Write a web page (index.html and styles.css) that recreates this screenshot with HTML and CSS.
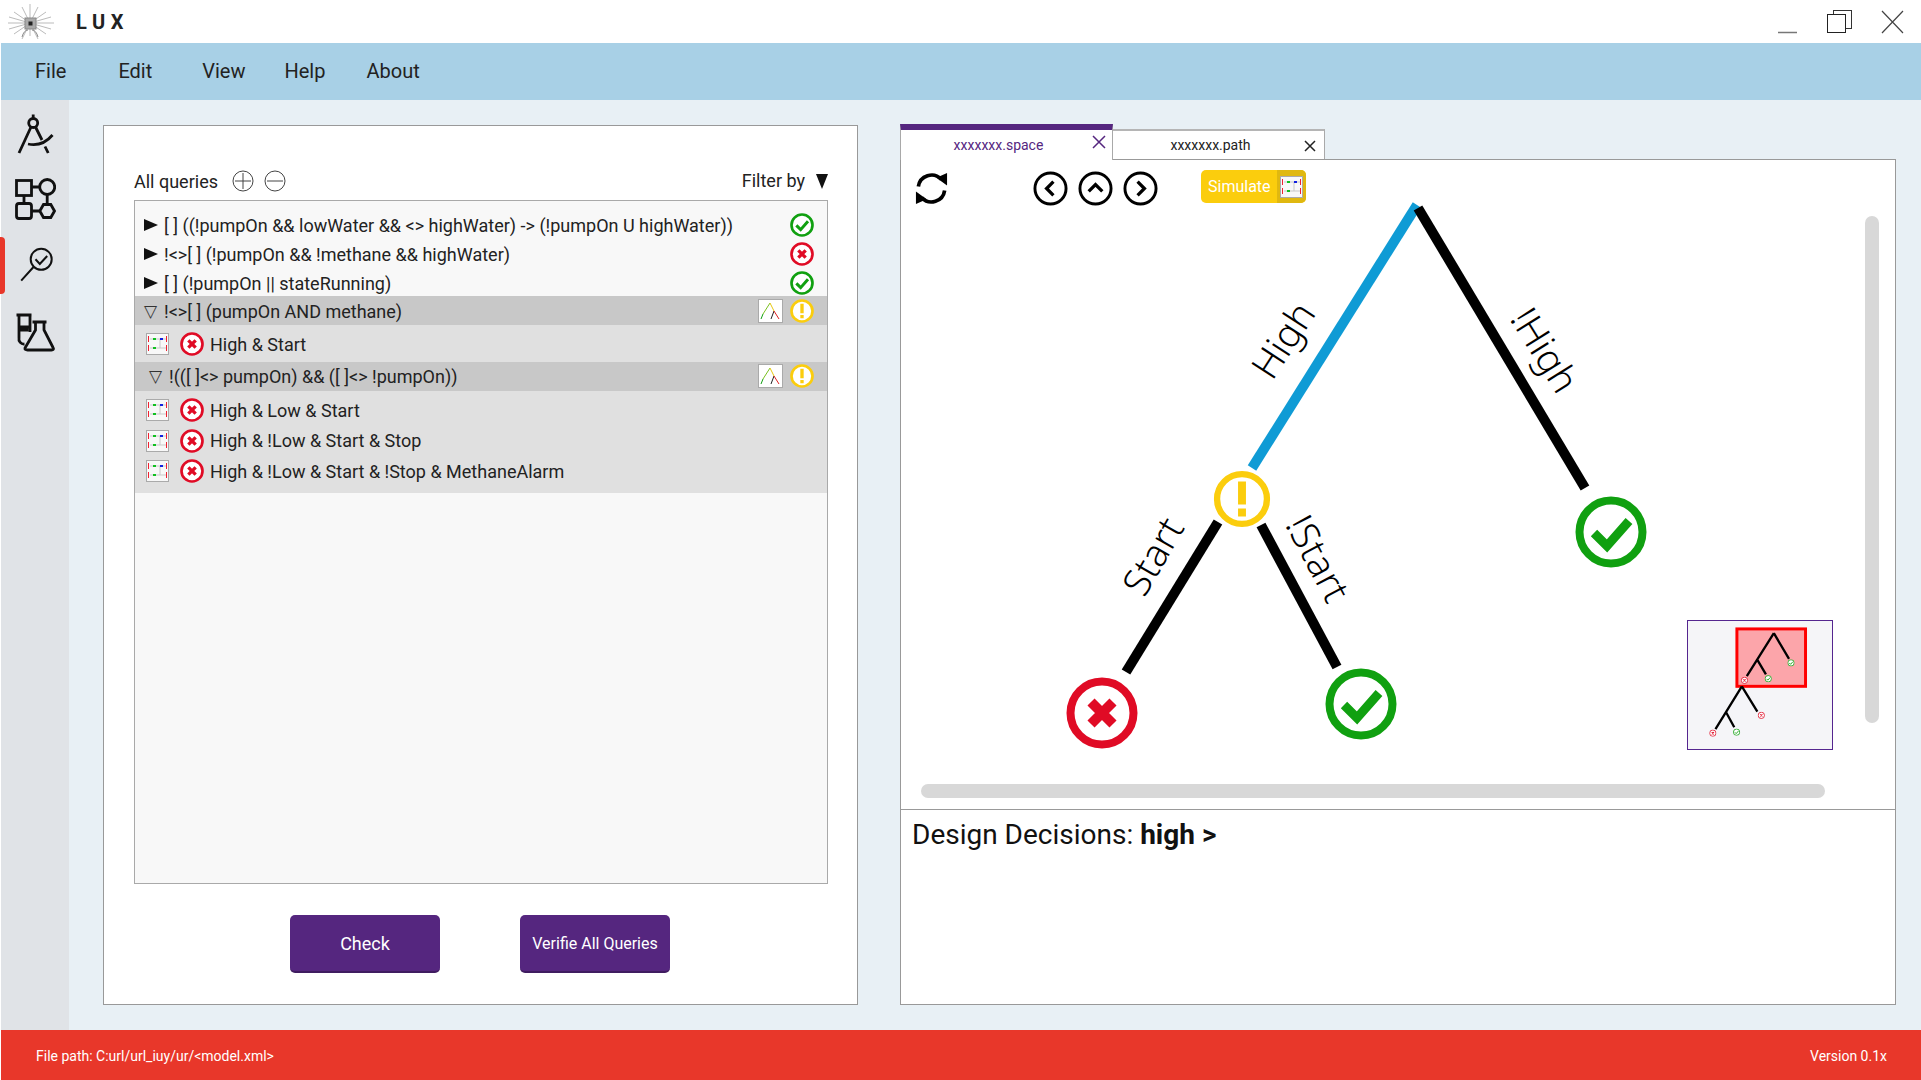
FILE: index.html
```html
<!DOCTYPE html>
<html lang="en">
    <head>
        <meta charset="UTF-8">
        <meta name="viewport" content="width=device-width, initial-scale=1.0">
        <title>LUX</title>
        <link rel="stylesheet" href="styles.css">
    </head>
    <body>
        <!-- shared icons -->
        <svg class="defs" width="0" height="0">
            <symbol id="ok" viewBox="0 0 72 72">
                <circle cx="36" cy="36" r="31.5" fill="#fff" stroke="#10a010" stroke-width="8"/>
                <path d="M19 37 L32 50 L54 25" fill="none" stroke="#10a010" stroke-width="9"/>
            </symbol>
            <symbol id="bad" viewBox="0 0 72 72">
                <circle cx="36" cy="36" r="31.5" fill="#fff" stroke="#e00b25" stroke-width="8"/>
                <path d="M25 25 L47 47 M47 25 L25 47" fill="none" stroke="#e00b25" stroke-width="10"/>
            </symbol>
            <symbol id="warn" viewBox="0 0 72 72">
                <circle cx="36" cy="36" r="31.5" fill="#fff" stroke="#fbcd0d" stroke-width="8"/>
                <path d="M31 14 H41 V43 H31 Z M31 48 H41 V58 H31 Z" fill="#fbcd0d"/>
            </symbol>
            <symbol id="trace" viewBox="0 0 23 22">
                <rect x="0.5" y="0.5" width="22" height="21" fill="#f8f8f8" stroke="#aaa"/>
                <path d="M4 6 H20 M4 15 H20 M14 6 V15" stroke="#c8c8c8" fill="none"/>
                <path d="M2.5 3 V9 M20.5 3 V9 M2.5 12 V18 M20.5 12 V18" stroke="#f02030" fill="none"/>
                <path d="M7 6 H10 M7 15 H10" stroke="#10c020" stroke-width="2" fill="none"/>
                <path d="M14 6 H17" stroke="#1020e0" stroke-width="2" fill="none"/>
            </symbol>
            <symbol id="thumb" viewBox="0 0 25 24">
                <rect x="0.5" y="0.5" width="24" height="23" fill="#fff" stroke="#aaa"/>
                <path d="M12 4 L5 15" stroke="#7ac020" fill="none"/>
                <path d="M5 15 L3 20" stroke="#10a010" fill="none"/>
                <path d="M12 4 L16 12" stroke="#e8c810" fill="none"/>
                <path d="M16 12 L13 20" stroke="#222" fill="none"/>
                <path d="M16 12 L21 20" stroke="#e02020" fill="none"/>
            </symbol>
        </svg>

        <div class="app">
            <div class="titlebar">
                <svg class="logo" width="48" height="40" viewBox="6 2 48 40" stroke="#bbb" fill="none">
                    <path d="M30 4 V36 M8 23 H54 M14 12 L46 34 M46 12 L14 34 M22 7 L38 39 M38 7 L22 39 M9 17 L51 29 M51 17 L9 29"/>
                    <path d="M22 37 Q24 30 28 30 M38 37 Q36 30 32 30" stroke="#888"/>
                    <rect x="25" y="18" width="11" height="11" fill="#aaa" stroke="#888"/>
                    <rect x="28.5" y="21.5" width="4" height="4" fill="#222" stroke="none"/>
                </svg>
                <span class="app-name">LUX</span>
                <div class="window-controls">
                    <svg class="win-min" width="20" height="24" viewBox="0 0 20 24"><path d="M0 22.5 H19" stroke="#777" stroke-width="1.5"/></svg>
                    <svg width="26" height="24" viewBox="0 0 26 24" fill="#fff">
                        <rect x="6.5" y="0.5" width="18" height="18" stroke="#333"/>
                        <rect x="0.5" y="4.5" width="18" height="18" stroke="#222"/>
                    </svg>
                    <svg width="23" height="24" viewBox="0 0 23 24"><path d="M1 1 L22 23 M22 1 L1 23" stroke="#444" stroke-width="1.2"/></svg>
                </div>
            </div>

            <div class="menubar">
                <span class="menu-item file">File</span>
                <span class="menu-item edit">Edit</span>
                <span class="menu-item view">View</span>
                <span class="menu-item help">Help</span>
                <span class="menu-item about">About</span>
            </div>

            <div class="workspace">
                <div class="sidebar">
                    <div class="nav-item">
                        <svg class="nav-icon" viewBox="11.5 112 44 44">
                            <circle cx="32.7" cy="123" r="4.5"/>
                            <path d="M32.7 114.5 V118.5 M30.5 127 L18.5 153 M35 127 L41.5 140 M44.5 146.5 L47.7 153 M27.5 144 Q42 147 52 135"/>
                        </svg>
                    </div>
                    <div class="nav-item">
                        <svg class="nav-icon" viewBox="11.5 178 44 44">
                            <rect x="16" y="180.5" width="15" height="15"/>
                            <circle cx="46.7" cy="187" r="7.5"/>
                            <rect x="16" y="203.5" width="15" height="15" rx="2.5"/>
                            <path d="M54 211 L50.3 217.5 H43 L39.3 211 L43 204.5 H50.3 Z"/>
                            <path d="M31 187 H39 M31 211 H39 M23.5 195.5 V203.5 M46.7 194.5 V204.5"/>
                        </svg>
                    </div>
                    <div class="nav-item active">
                        <span class="active-mark"></span>
                        <svg class="nav-icon fine" viewBox="11.5 244 44 44">
                            <circle cx="40.7" cy="259.3" r="10.5"/>
                            <path d="M33 267 L20.7 280.7 M35 259.3 L39.3 264 L46.7 256"/>
                        </svg>
                    </div>
                    <div class="nav-item">
                        <svg class="nav-icon" viewBox="11.5 311 44 44">
                            <path d="M16 316 H31 M18.5 316 V339 A5 5 0 0 0 24 345 M29.5 316 V333 M18.5 328 H29 M18.5 331 H28"/>
                            <path d="M32 323 H46 M35 323 V331 L24.5 349 Q24 351 27 351 H51 Q54 351 52.5 348.5 L43.5 331 V323"/>
                        </svg>
                    </div>
                </div>

                <div class="main">
                    <div class="queries-panel">
                        <div class="queries-head">
                            <span class="queries-title">All queries</span>
                            <svg class="round-btn" viewBox="0 0 22 22"><circle cx="11" cy="11" r="10"/><path d="M11 3 V19 M3 11 H19"/></svg>
                            <svg class="round-btn" viewBox="0 0 22 22"><circle cx="11" cy="11" r="10"/><path d="M3 11 H19"/></svg>
                            <span class="filter">Filter by</span>
                            <span class="filter-arrow"></span>
                        </div>

                        <div class="query-list">
                            <div class="query-row">
                                <span class="caret"></span>
                                <span class="query-text">[ ] ((!pumpOn &amp;&amp; lowWater &amp;&amp; &lt;&gt; highWater) -&gt; (!pumpOn U highWater))</span>
                                <svg class="status"><use href="#ok"/></svg>
                            </div>
                            <div class="query-row">
                                <span class="caret"></span>
                                <span class="query-text">!&lt;&gt;[ ] (!pumpOn &amp;&amp; !methane &amp;&amp; highWater)</span>
                                <svg class="status"><use href="#bad"/></svg>
                            </div>
                            <div class="query-row short">
                                <span class="caret"></span>
                                <span class="query-text">[ ] (!pumpOn || stateRunning)</span>
                                <svg class="status"><use href="#ok"/></svg>
                            </div>
                            <div class="query-row open first-open">
                                <span class="caret-open">&#9661;</span>
                                <span class="query-text">!&lt;&gt;[ ] (pumpOn AND methane)</span>
                                <svg class="thumb"><use href="#thumb"/></svg>
                                <svg class="status"><use href="#warn"/></svg>
                            </div>
                            <div class="children single">
                                <div class="child-row">
                                    <svg class="trace"><use href="#trace"/></svg>
                                    <svg class="child-status"><use href="#bad"/></svg>
                                    <span>High &amp; Start</span>
                                </div>
                            </div>
                            <div class="query-row open deep">
                                <span class="caret-open">&#9661;</span>
                                <span class="query-text">!(([ ]&lt;&gt; pumpOn) &amp;&amp; ([ ]&lt;&gt; !pumpOn))</span>
                                <svg class="thumb"><use href="#thumb"/></svg>
                                <svg class="status"><use href="#warn"/></svg>
                            </div>
                            <div class="children">
                                <div class="child-row">
                                    <svg class="trace"><use href="#trace"/></svg>
                                    <svg class="child-status"><use href="#bad"/></svg>
                                    <span>High &amp; Low &amp; Start</span>
                                </div>
                                <div class="child-row">
                                    <svg class="trace"><use href="#trace"/></svg>
                                    <svg class="child-status"><use href="#bad"/></svg>
                                    <span>High &amp; !Low &amp; Start &amp; Stop</span>
                                </div>
                                <div class="child-row">
                                    <svg class="trace"><use href="#trace"/></svg>
                                    <svg class="child-status"><use href="#bad"/></svg>
                                    <span>High &amp; !Low &amp; Start &amp; !Stop &amp; MethaneAlarm</span>
                                </div>
                            </div>
                        </div>

                        <div class="actions">
                            <button class="btn check">Check</button>
                            <button class="btn verify">Verifie All Queries</button>
                        </div>
                    </div>

                    <div class="space-panel">
                        <div class="tabs">
                            <div class="tab active-tab">
                                <span>xxxxxxx.space</span>
                                <svg class="tab-close" viewBox="0 0 14 14"><path d="M1 1 L13 13 M13 1 L1 13"/></svg>
                            </div>
                            <div class="tab">
                                <span>xxxxxxx.path</span>
                                <svg class="tab-close" viewBox="0 0 14 14"><path d="M2 2 L12 12 M12 2 L2 12"/></svg>
                            </div>
                        </div>
                        <div class="pane">
                            <div class="canvas">
                                <svg class="tree" width="993" height="649" viewBox="901 160 993 649">
                                    <path d="M1417 205 L1252 468" stroke="#0f9bd5" stroke-width="10"/>
                                    <path d="M1418 208 L1585 488" stroke="#000" stroke-width="10"/>
                                    <path d="M1218 522 L1126 672" stroke="#000" stroke-width="10"/>
                                    <path d="M1261 525 L1337 667" stroke="#000" stroke-width="10"/>
                                    <use href="#warn" x="1213.5" y="470.5" width="57" height="57"/>
                                    <use href="#ok" x="1575" y="496" width="72" height="72"/>
                                    <use href="#bad" x="1066" y="677" width="72" height="72"/>
                                    <use href="#ok" x="1325" y="668" width="72" height="72"/>
                                    <text class="edge" transform="translate(1286 342) rotate(-57)">High</text>
                                    <text class="edge" transform="translate(1542 352) rotate(58)">!High</text>
                                    <text class="edge" transform="translate(1156 558) rotate(-60)">Start</text>
                                    <text class="edge" transform="translate(1315 560) rotate(62)">!Start</text>
                                </svg>

                                <div class="toolbar">
                                    <svg class="refresh" viewBox="0 0 36 36">
                                        <path d="M4.5 16 A13.7 13.7 0 0 1 28 8.5 M31.5 20 A13.7 13.7 0 0 1 8 27.5" fill="none" stroke="#000" stroke-width="3.8"/>
                                        <path d="M23 7 L34 2 L34 15 Z M13 29 L2 34 L2 21 Z" fill="#000"/>
                                    </svg>
                                    <div class="nav-group">
                                        <svg class="nav-btn" viewBox="0 0 36 36"><circle cx="18" cy="18" r="16"/><path d="M21 11 L14 18 L21 25"/></svg>
                                        <svg class="nav-btn" viewBox="0 0 36 36"><circle cx="18" cy="18" r="16"/><path d="M11 21 L18 14 L25 21"/></svg>
                                        <svg class="nav-btn" viewBox="0 0 36 36"><circle cx="18" cy="18" r="16"/><path d="M15 11 L22 18 L15 25"/></svg>
                                    </div>
                                    <div class="simulate">
                                        <span class="simulate-label">Simulate</span>
                                        <span class="simulate-icon"><svg class="trace"><use href="#trace"/></svg></span>
                                    </div>
                                </div>

                                <div class="scroll-v"></div>
                                <div class="scroll-h"></div>

                                <svg class="minimap" width="146" height="130" viewBox="52 30 436 388">
                                    <rect x="200" y="54" width="208" height="174" fill="#fca5aa" stroke="#f00" stroke-width="9"/>
                                    <path d="M312 67 L230 197 M262 148 L288 192 M312 67 L358 145 M215 228 L135 358 M168 308 L192 352 M215 228 L262 305" fill="none" stroke="#000" stroke-width="7"/>
                                    <use href="#bad" x="212" y="199" width="22" height="22"/>
                                    <use href="#ok" x="284" y="194" width="22" height="22"/>
                                    <use href="#ok" x="353" y="146" width="22" height="22"/>
                                    <use href="#bad" x="263" y="305" width="22" height="22"/>
                                    <use href="#bad" x="116" y="359" width="22" height="22"/>
                                    <use href="#ok" x="188" y="356" width="22" height="22"/>
                                </svg>
                            </div>
                            <div class="decisions">Design Decisions: <b>high &gt;</b></div>
                        </div>
                    </div>
                </div>
            </div>

            <div class="statusbar">
                <span>File path: C:url/url_iuy/ur/&lt;model.xml&gt;</span>
                <span>Version 0.1x</span>
            </div>
        </div>
    </body>
</html>
```

FILE: styles.css
```css
* {
    box-sizing: border-box;
}

body {
    font-family: Roboto, "Liberation Sans", sans-serif;
    background-color: #fff;
    color: #222;
    margin: 0;
    padding: 0;
}

.defs {
    position: absolute;
}

.app {
    display: flex;
    flex-direction: column;
    height: 1080px;
    width: 1921px;
    overflow: hidden;
}

/* title bar */
.titlebar {
    display: flex;
    align-items: center;
    height: 43px;
    padding-left: 6px;
    padding-right: 17px;
}

.logo {
    flex: none;
}

.app-name {
    font-size: 20px;
    font-weight: 700;
    letter-spacing: 5.5px;
    margin-left: 22px;
    color: #222;
}

.window-controls {
    display: flex;
    gap: 28px;
    margin-left: auto;
}

.win-min {
    margin-right: 1px;
}

/* menu */
.menubar {
    display: flex;
    align-items: center;
    height: 57px;
    margin-left: 1px;
    padding-bottom: 2px;
    background-color: #a8d0e6;
    font-size: 20px;
    color: #222;
}

.menu-item.file { margin-left: 34px; }
.menu-item.edit { margin-left: 52px; }
.menu-item.view { margin-left: 50px; }
.menu-item.help { margin-left: 39px; }
.menu-item.about { margin-left: 41px; }

.workspace {
    display: flex;
    flex: 1;
    margin-left: 1px;
    min-height: 0;
}

/* left icons */
.sidebar {
    width: 68px;
    flex: none;
    padding-top: 1px;
    background-color: #e0e3e7;
}

.nav-item {
    position: relative;
    height: 66px;
    display: flex;
    align-items: center;
    padding-left: 10.5px;
}

.nav-icon {
    width: 44px;
    height: 44px;
    fill: none;
    stroke: #111;
    stroke-width: 2.8;
}

.nav-icon.fine {
    stroke-width: 2;
}

.active-mark {
    position: absolute;
    left: -1px;
    top: 4px;
    width: 5px;
    height: 57px;
    background-color: #e8372a;
    border-radius: 0 4px 4px 0;
}

.main {
    flex: 1;
    display: flex;
    gap: 42px;
    padding: 25px 25px 25px 34px;
    background-color: #e8f0f5;
    min-width: 0;
}

/* queries */
.queries-panel {
    width: 755px;
    flex: none;
    background-color: #fff;
    border: 1px solid #999;
    padding: 40px 29px 0 30px;
}

.queries-head {
    display: flex;
    align-items: center;
    height: 30px;
    font-size: 18px;
}

.round-btn {
    width: 22px;
    height: 22px;
    margin-left: 10px;
    fill: none;
    stroke: #444;
    stroke-width: 1;
}

.queries-title {
    margin-right: 4px;
}

.filter {
    margin-left: auto;
    margin-top: -2px;
}

.filter-arrow {
    width: 0;
    height: 0;
    margin-left: 11px;
    margin-top: 1px;
    border-left: 6.5px solid transparent;
    border-right: 6.5px solid transparent;
    border-top: 15px solid #111;
}

.query-list {
    height: 684px;
    margin-top: 4px;
    padding-top: 10px;
    background-color: #f8f8f8;
    border: 1px solid #a9a9a9;
    font-size: 18px;
}

.query-row {
    display: flex;
    align-items: center;
    height: 29px;
    padding-left: 9px;
    padding-right: 13px;
    color: #222;
}

.query-row.short {
    height: 27px;
    padding-top: 2px;
}

.query-row.open {
    background-color: #c8c8c8;
}

.query-row.first-open {
    padding-top: 2px;
}

.query-row.deep {
    padding-left: 14px;
}

.caret {
    width: 0;
    height: 0;
    border-top: 6.5px solid transparent;
    border-bottom: 6.5px solid transparent;
    border-left: 14px solid #111;
    margin-right: 6px;
    margin-top: -2px;
}

.caret-open {
    width: 20px;
    font-size: 17px;
    line-height: 1;
    color: #333;
    font-family: "DejaVu Sans", sans-serif;
}

.query-text {
    flex: 1;
}

.status {
    width: 24px;
    height: 24px;
    flex: none;
    margin-top: -1px;
}

.thumb {
    width: 25px;
    height: 24px;
    flex: none;
    margin-right: 7px;
    margin-top: -1px;
}

.children {
    background-color: #e0e0e0;
    padding: 4px 0 6px;
}

.children.single {
    padding: 0;
}

.child-row {
    display: flex;
    align-items: center;
    height: 30.5px;
    padding-left: 11px;
    font-size: 18px;
}

.children.single .child-row {
    height: 37px;
    padding-top: 1px;
}

.trace {
    width: 23px;
    height: 22px;
    flex: none;
}

.child-status {
    width: 24px;
    height: 24px;
    margin-left: 11px;
    margin-right: 6px;
    flex: none;
}

.actions {
    display: flex;
    gap: 80px;
    margin-top: 31px;
    margin-left: 156px;
}

.btn {
    width: 150px;
    height: 58px;
    border: none;
    border-bottom: 2px solid #3f1c60;
    border-radius: 5px;
    background-color: #55267f;
    color: #fff;
    font-family: Roboto, sans-serif;
    font-size: 18px;
}

.btn.verify {
    font-size: 16px;
}

/* right side */
.space-panel {
    flex: 1;
    display: flex;
    flex-direction: column;
    min-width: 0;
}

.tabs {
    display: flex;
    align-items: flex-end;
    height: 35px;
    margin-top: -1px;
    position: relative;
}

.tab {
    position: relative;
    display: flex;
    align-items: center;
    justify-content: center;
    width: 212px;
    height: 30px;
    padding-right: 16px;
    background-color: #fff;
    border: 1px solid #a9a9a9;
    border-top: 2px solid #b5b5b5;
    border-left: none;
    border-bottom: none;
    font-size: 14px;
    color: #222;
}

.active-tab {
    width: 213px;
    height: 36px;
    margin-bottom: -1px;
    z-index: 1;
    border-left: 1px solid #a9a9a9;
    border-top: 6px solid #55267f;
    color: #55267f;
}

.tab-close {
    position: absolute;
    right: 7px;
    top: 8px;
    width: 14px;
    height: 14px;
    fill: none;
    stroke: #222;
    stroke-width: 1.5;
}

.active-tab .tab-close {
    stroke: #55267f;
    top: 5px;
    right: 6px;
}

.pane {
    flex: 1;
    display: flex;
    flex-direction: column;
    background-color: #fff;
    border: 1px solid #999;
    min-height: 0;
}

.canvas {
    position: relative;
    height: 650px;
    flex: none;
    border-bottom: 1px solid #999;
}

.tree {
    position: absolute;
    left: 0;
    top: 0;
}

.edge {
    font-family: "Noto Sans", sans-serif;
    font-weight: 300;
    font-size: 38px;
    text-anchor: middle;
    dominant-baseline: middle;
    fill: #000;
}

.toolbar {
    position: relative;
    display: flex;
    align-items: flex-start;
    padding: 11px 0 0 13px;
}

.refresh {
    width: 35px;
    height: 35px;
    margin-right: 84px;
}

.nav-group {
    display: flex;
    gap: 10px;
}

.nav-btn {
    width: 35px;
    height: 35px;
    fill: none;
    stroke: #000;
    stroke-width: 3;
}

.nav-btn path {
    stroke-width: 3.4;
}

.simulate {
    display: flex;
    height: 33px;
    margin-left: 43px;
    margin-top: -1px;
    border-radius: 5px;
    overflow: hidden;
    background-color: #fbcd0d;
    color: #fff;
    font-size: 16px;
}

.simulate-label {
    display: flex;
    align-items: center;
    padding: 0 6px 0 7px;
}

.simulate-icon {
    display: flex;
    align-items: center;
    padding: 0 3px;
    background-color: #e0b810;
}

.scroll-v {
    position: absolute;
    left: 964px;
    top: 56px;
    width: 14px;
    height: 507px;
    background-color: #d8d8d8;
    border-radius: 7px;
}

.scroll-h {
    position: absolute;
    left: 20px;
    top: 624px;
    width: 904px;
    height: 14px;
    background-color: #d8d8d8;
    border-radius: 7px;
}

.minimap {
    position: absolute;
    left: 786px;
    top: 460px;
    background-color: #f5f5f8;
    border: 1.5px solid #55268f;
}

.decisions {
    padding: 8px 0 0 11px;
    font-size: 28px;
    color: #111;
}

.decisions b {
    font-weight: 700;
}

.statusbar {
    display: flex;
    align-items: center;
    justify-content: space-between;
    height: 50px;
    margin-left: 1px;
    padding: 1px 34px 0 35px;
    background-color: #e8372a;
    color: #fff;
    font-size: 14px;
}
```
